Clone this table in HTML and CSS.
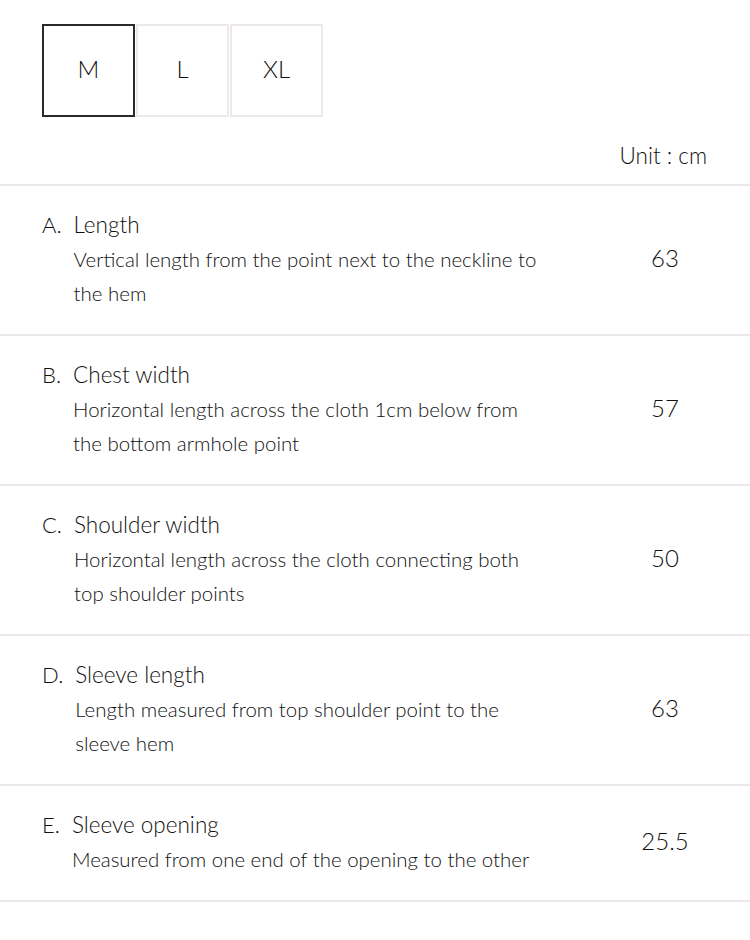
FILE: index.html
```html
<!DOCTYPE html>
<html lang="en">
<head>
<meta charset="utf-8">
<title>Size guide</title>
<link rel="stylesheet" href="styles.css">
</head>
<body>
<div class="page">
  <div class="sizes">
    <button class="size active">M</button>
    <button class="size">L</button>
    <button class="size">XL</button>
  </div>
  <div class="unit">Unit : cm</div>
  <ul class="table">
    <li class="row">
      <div class="info">
        <span class="label">A.</span>
        <div class="text">
          <div class="title">Length</div>
          <div class="desc">Vertical length from the point next to the neckline to the hem</div>
        </div>
      </div>
      <div class="value">63</div>
    </li>
    <li class="row">
      <div class="info">
        <span class="label">B.</span>
        <div class="text">
          <div class="title">Chest width</div>
          <div class="desc">Horizontal length across the cloth 1cm below from the bottom armhole point</div>
        </div>
      </div>
      <div class="value">57</div>
    </li>
    <li class="row">
      <div class="info">
        <span class="label">C.</span>
        <div class="text">
          <div class="title">Shoulder width</div>
          <div class="desc">Horizontal length across the cloth connecting both top shoulder points</div>
        </div>
      </div>
      <div class="value">50</div>
    </li>
    <li class="row">
      <div class="info">
        <span class="label">D.</span>
        <div class="text">
          <div class="title">Sleeve length</div>
          <div class="desc">Length measured from top shoulder point to the sleeve hem</div>
        </div>
      </div>
      <div class="value">63</div>
    </li>
    <li class="row">
      <div class="info">
        <span class="label">E.</span>
        <div class="text">
          <div class="title">Sleeve opening</div>
          <div class="desc">Measured from one end of the opening to the other</div>
        </div>
      </div>
      <div class="value">25.5</div>
    </li>
  </ul>
</div>
</body>
</html>
```

FILE: styles.css
```css
* { box-sizing: border-box; }
html, body { margin: 0; padding: 0; background: #fff; }
body {
  font-family: Lato, "Noto Sans", "DejaVu Sans", sans-serif;
  font-weight: 300;
  color: #111;
  font-size: 20px;
}
.page { width: 750px; }
.sizes {
  display: flex;
  gap: 1px;
  padding: 24px 0 0 42px;
}
.size {
  display: block;
  width: 93px;
  height: 93px;
  border: 2px solid #ece8ec;
  background: #fff;
  font-family: inherit;
  font-weight: 300;
  font-size: 24px;
  color: #111;
  padding: 0 0 4px;
  margin: 0;
}
.size.active { border-color: #2a2a2a; }
.unit {
  text-align: right;
  padding: 24px 43px 0 0;
  height: 67px;
  line-height: 30px;
  font-size: 22.5px;
}
.table {
  list-style: none;
  margin: 0;
  padding: 0;
  border-top: 2px solid #ece7ec;
}
.row {
  display: flex;
  align-items: center;
  padding: 22px 35px 24px 42px;
  border-bottom: 2px solid #ece7ec;
}
.info {
  display: flex;
  flex: 1;
  gap: 12px;
  line-height: 34px;
}
.label { font-size: 22px; }
.text { width: 470px; }
.title { font-size: 22.5px; }
.desc { font-size: 20.45px; }
.value {
  width: 100px;
  text-align: center;
  font-size: 24px;
  padding-bottom: 3px;
}
```
